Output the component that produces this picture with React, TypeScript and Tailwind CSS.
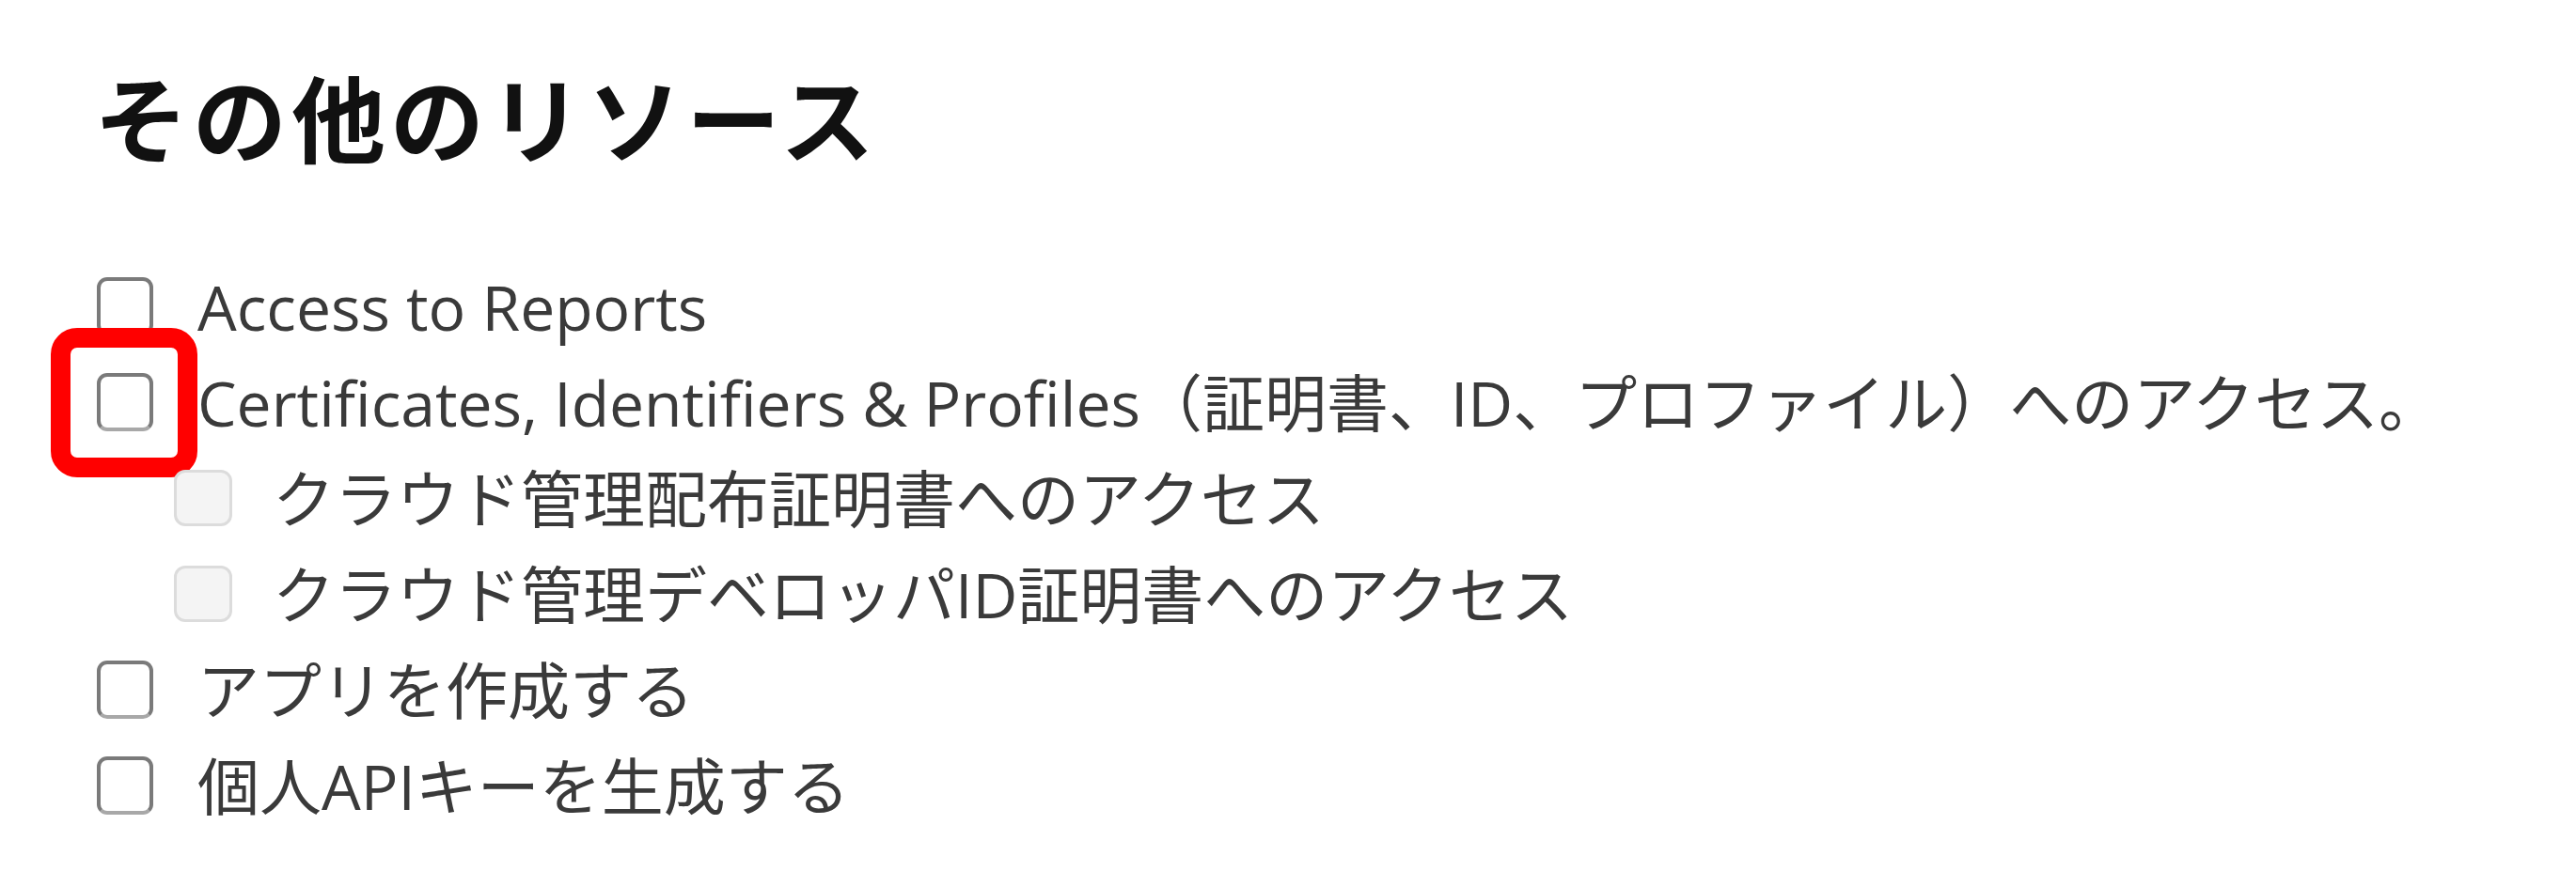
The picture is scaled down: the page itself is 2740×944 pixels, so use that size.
const rows: { label: string; sub?: boolean; marked?: boolean }[] = [
  { label: "Access to Reports" },
  {
    label:
      "Certificates, Identifiers & Profiles（証明書、ID、プロファイル）へのアクセス。",
    marked: true,
  },
  { label: "クラウド管理配布証明書へのアクセス", sub: true },
  { label: "クラウド管理デベロッパID証明書へのアクセス", sub: true },
  { label: "アプリを作成する" },
  { label: "個人APIキーを生成する" },
];

function Box({ sub }: { sub?: boolean }) {
  if (sub) {
    return (
      <span className="block h-[60px] w-[62px] rounded-[12px] border-[3px] border-[#dcdcdc] bg-[#f4f4f4]" />
    );
  }
  return (
    <span className="block h-[62px] w-[60px] rounded-[11px] border-[4px] border-[#7a7a7a] border-b-[#a8a8a8] bg-white" />
  );
}

export default function App() {
  return (
    <div className="h-[944px] w-[2740px] overflow-hidden bg-white pl-[100px] pt-[77px] font-['Open_Sans','Noto_Sans_CJK_JP',sans-serif]">
      <h1 className="text-[100px] font-bold leading-none tracking-[5px] text-[#111]">
        その他のリソース
      </h1>

      <ul className="mt-[98px]">
        {rows.map((r) => (
          <li key={r.label} className="flex h-[102px] items-center">
            <div className={r.sub ? "relative ml-[85px]" : "relative ml-[3px]"}>
              <Box sub={r.sub} />
              {r.marked && (
                <span className="absolute left-[-49px] top-[-48px] h-[159px] w-[156px] rounded-[28px] border-[21px] border-[#ff0000]" />
              )}
            </div>
            <span
              className={
                r.sub
                  ? "ml-[43px] whitespace-nowrap text-[66px] leading-none text-[#3a3a3a]"
                  : "ml-[47px] whitespace-nowrap text-[66px] leading-none text-[#3a3a3a]"
              }
            >
              {r.label}
            </span>
          </li>
        ))}
      </ul>
    </div>
  );
}
